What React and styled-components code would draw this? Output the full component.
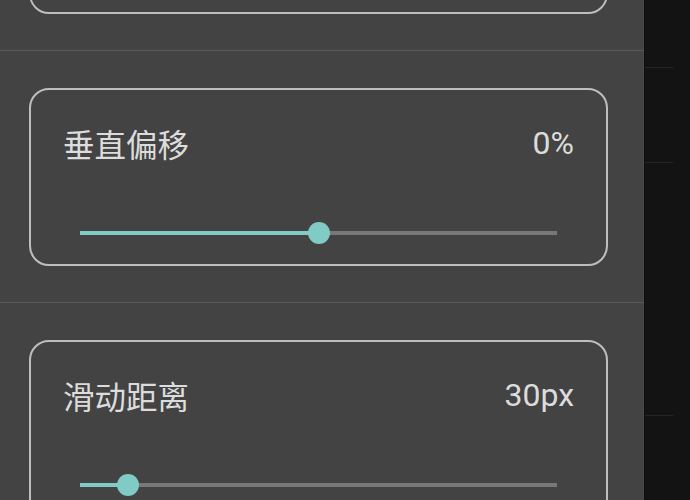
import React from "react";
import styled, { createGlobalStyle } from "styled-components";

const Global = createGlobalStyle`
  html, body { margin: 0; padding: 0; background: #131313; overflow: hidden; }
  * { box-sizing: border-box; }
`;

const Screen = styled.div`
  display: flex;
  width: 690px;
  height: 500px;
  overflow: hidden;
  background: #131313;
`;

const Panel = styled.div`
  width: 645px;
  flex: none;
  height: 100%;
  overflow: hidden;
  background: #434343;
  border-right: 1px solid #0d0d0d;
  box-shadow: inset -1px 0 0 #4a4a4a;
`;

const List = styled.div`
  display: flex;
  flex-direction: column;
  margin-top: -202px;
`;

const Section = styled.section`
  border-top: 1px solid #5a5a5a;
  padding: 37px 36px 36px 29px;
`;

const Card = styled.div`
  height: 178px;
  border: 2px solid #bebebe;
  border-radius: 20px;
  padding: 33px 32px 0;
  display: flex;
  flex-direction: column;
`;

const Header = styled.div`
  display: flex;
  justify-content: space-between;
  align-items: center;
  height: 40px;
  line-height: 40px;
  color: #dcdcdc;
`;

const Title = styled.span`
  font-family: "Noto Sans CJK SC", Roboto, sans-serif;
  font-size: 31.5px;
  font-weight: 400;
`;

const Value = styled.span`
  font-family: Roboto, sans-serif;
  font-size: 32px;
`;

const SliderBox = styled.div`
  margin-top: 55px;
  height: 30px;
  padding: 0 17px;
  display: flex;
  align-items: center;
`;

const Track = styled.div`
  position: relative;
  flex: 1;
  height: 4px;
  background: #787878;
`;

const Fill = styled.div`
  position: absolute;
  left: 0;
  top: 0;
  bottom: 0;
  background: #80cbc4;
`;

const Thumb = styled.div`
  position: absolute;
  top: 50%;
  width: 22px;
  height: 22px;
  margin-left: -11px;
  margin-top: -11px;
  border-radius: 50%;
  background: #80cbc4;
`;

const Behind = styled.div`
  flex: 1;
  display: flex;
  flex-direction: column;
`;

const BehindRow = styled.div`
  height: ${(p) => p.$h}px;
  margin-right: 17px;
  border-bottom: 1px solid #262626;
  flex: none;
`;

function Slider({ percent }) {
  return (
    <SliderBox>
      <Track>
        <Fill style={{ width: `${percent}%` }} />
        <Thumb style={{ left: `${percent}%` }} />
      </Track>
    </SliderBox>
  );
}

const items = [
  { title: "水平偏移", value: "0%", percent: 50 },
  { title: "垂直偏移", value: "0%", percent: 50 },
  { title: "滑动距离", value: "30px", percent: 10 },
];

export default function App() {
  return (
    <>
      <Global />
      <Screen>
        <Panel>
          <List>
            {items.map((it) => (
              <Section key={it.title}>
                <Card>
                  <Header>
                    <Title>{it.title}</Title>
                    <Value>{it.value}</Value>
                  </Header>
                  <Slider percent={it.percent} />
                </Card>
              </Section>
            ))}
          </List>
        </Panel>
        <Behind>
          <BehindRow $h={68} />
          <BehindRow $h={95} />
          <BehindRow $h={253} />
        </Behind>
      </Screen>
    </>
  );
}
